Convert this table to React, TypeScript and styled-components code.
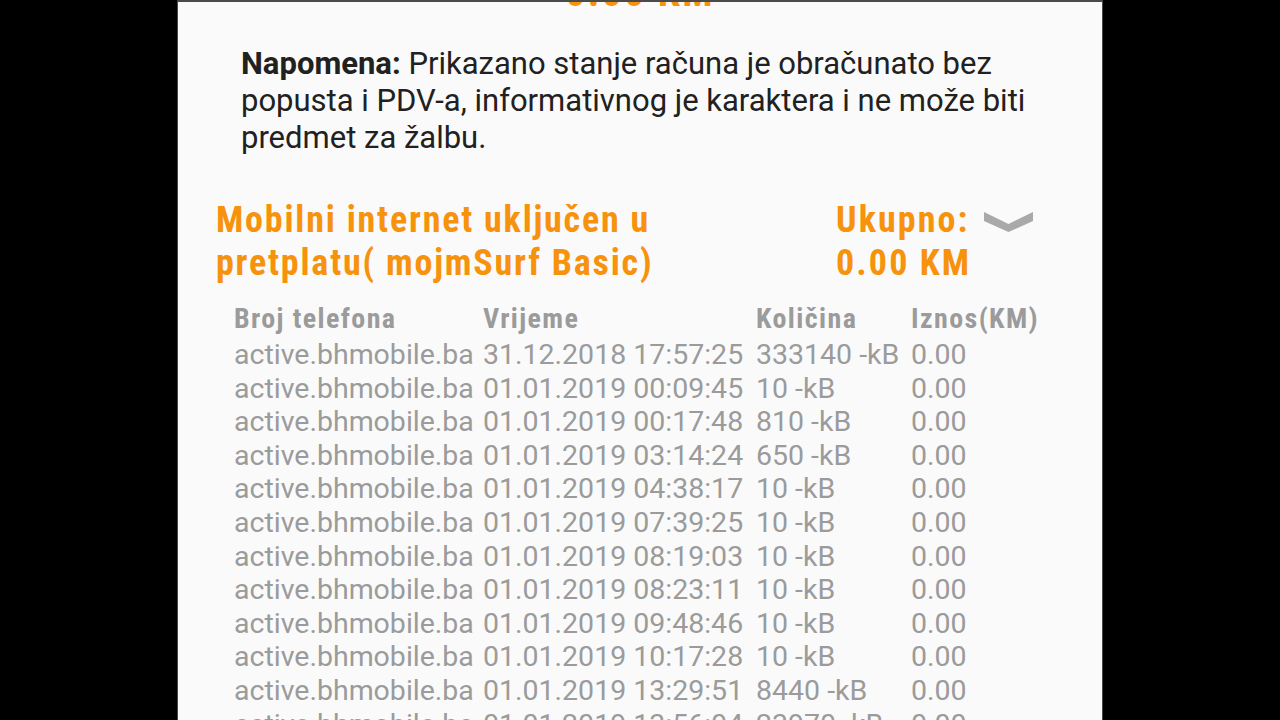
import React from "react";
import styled, { createGlobalStyle } from "styled-components";

const Global = createGlobalStyle`
  html, body { margin: 0; padding: 0; background: #000; }
  body { font-family: Roboto, "Noto Sans", sans-serif; }
`;

const Screen = styled.div`
  width: 1280px;
  height: 720px;
  overflow: hidden;
  background: #000;
  display: flex;
  justify-content: center;
`;

const Panel = styled.div`
  width: 924px;
  height: 760px;
  background: #fafafa;
  border-left: 1px solid #4a4a4a;
  border-right: 1px solid #4a4a4a;
  border-top: 2px solid #4a4a4a;
  display: flex;
  flex-direction: column;
  overflow: hidden;
`;

const Scroller = styled.div`
  margin-top: -29px;
  display: flex;
  flex-direction: column;
`;

const condensed = `"Roboto Condensed", "Liberation Sans Narrow", Roboto, sans-serif`;
const orange = "#f7920c";

const TopTotal = styled.div`
  font-family: ${condensed};
  font-weight: 700;
  font-size: 40px;
  line-height: 40px;
  letter-spacing: 2.2px;
  color: ${orange};
  text-align: center;
`;

const Note = styled.p`
  margin: 32px 0 0 63px;
  width: 810px;
  font-family: Roboto, sans-serif;
  font-size: 31px;
  line-height: 37px;
  color: #212121;
`;

const NoteLabel = styled.b`
  font-weight: 700;
`;

const SectionHead = styled.div`
  margin: 43px 0 0 38px;
  display: flex;
  align-items: flex-start;
`;

const SectionTitle = styled.div`
  width: 460px;
  margin-right: 160px;
  font-family: ${condensed};
  font-weight: 700;
  font-size: 36px;
  line-height: 43px;
  letter-spacing: 1.8px;
  color: ${orange};
`;

const TotalBlock = styled.div`
  font-family: ${condensed};
  font-weight: 700;
  font-size: 36px;
  line-height: 43px;
  letter-spacing: 2.1px;
  color: ${orange};
`;

const TotalLabel = styled.div`
  display: flex;
  align-items: center;
  gap: 15px;
`;

const Chevron = styled.svg`
  width: 49px;
  height: 23px;
  margin-top: 2px;
`;

const Table = styled.div`
  margin: 15px 0 0 56px;
  display: grid;
  grid-template-columns: 249px 273px 155px auto;
  color: #9b9b9b;
`;

const HeadCell = styled.div`
  font-family: ${condensed};
  font-weight: 700;
  font-size: 28px;
  line-height: 38px;
  letter-spacing: 1.4px;
  white-space: nowrap;
`;

const Cell = styled.div`
  font-family: Roboto, sans-serif;
  font-size: 28.5px;
  line-height: 33.6px;
  white-space: nowrap;
`;

const rows: [string, string, string][] = [
  ["31.12.2018 17:57:25", "333140 -kB", "0.00"],
  ["01.01.2019 00:09:45", "10 -kB", "0.00"],
  ["01.01.2019 00:17:48", "810 -kB", "0.00"],
  ["01.01.2019 03:14:24", "650 -kB", "0.00"],
  ["01.01.2019 04:38:17", "10 -kB", "0.00"],
  ["01.01.2019 07:39:25", "10 -kB", "0.00"],
  ["01.01.2019 08:19:03", "10 -kB", "0.00"],
  ["01.01.2019 08:23:11", "10 -kB", "0.00"],
  ["01.01.2019 09:48:46", "10 -kB", "0.00"],
  ["01.01.2019 10:17:28", "10 -kB", "0.00"],
  ["01.01.2019 13:29:51", "8440 -kB", "0.00"],
  ["01.01.2019 13:56:04", "23970 -kB", "0.00"],
];

export default function App() {
  return (
    <>
      <Global />
      <Screen>
        <Panel>
          <Scroller>
            <TopTotal>0.00 KM</TopTotal>
            <Note>
              <NoteLabel>Napomena:</NoteLabel> Prikazano stanje računa je obračunato bez
              popusta i PDV-a, informativnog je karaktera i ne može biti predmet za žalbu.
            </Note>
            <SectionHead>
              <SectionTitle>Mobilni internet uključen u pretplatu( mojmSurf Basic)</SectionTitle>
              <TotalBlock>
                <TotalLabel>
                  Ukupno:
                  <Chevron viewBox="0 0 49 23">
                    <polygon points="0,2 24.5,14 49,2 49,11 24.5,22 0,11" fill="#a9a9a9" />
                  </Chevron>
                </TotalLabel>
                0.00 KM
              </TotalBlock>
            </SectionHead>
            <Table>
              <HeadCell>Broj telefona</HeadCell>
              <HeadCell>Vrijeme</HeadCell>
              <HeadCell>Količina</HeadCell>
              <HeadCell>Iznos(KM)</HeadCell>
              {rows.map((r, i) => (
                <React.Fragment key={i}>
                  <Cell>active.bhmobile.ba</Cell>
                  <Cell>{r[0]}</Cell>
                  <Cell>{r[1]}</Cell>
                  <Cell>{r[2]}</Cell>
                </React.Fragment>
              ))}
            </Table>
          </Scroller>
        </Panel>
      </Screen>
    </>
  );
}
